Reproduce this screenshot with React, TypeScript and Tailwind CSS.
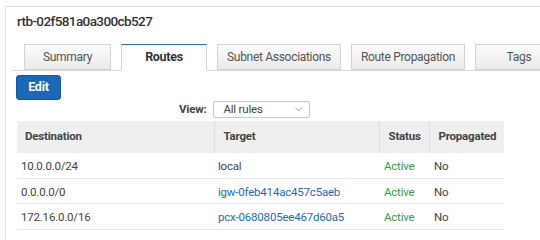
import { ChevronDown } from "lucide-react"

const tabs = [
  ["Summary", 87],
  ["Routes", 86],
  ["Subnet Associations", 124],
  ["Route Propagation", 114],
  ["Tags", 88],
] as const

const routes = [
  { dest: "10.0.0.0/24", target: "local", link: false, h: "h-[26px]" },
  { dest: "0.0.0.0/0", target: "igw-0feb414ac457c5aeb", link: true, h: "h-[25px]" },
  { dest: "172.16.0.0/16", target: "pcx-0680805ee467d60a5", link: true, h: "h-[26px]" },
]

export default function App() {
  return (
    <div className="w-[540px] h-[240px] overflow-hidden bg-white font-['Roboto',sans-serif] text-[#444]">
      <div className="ml-[5px] mt-[6px] h-[234px] border-l border-t border-[#e4e4e4]">
        <div className="pl-[11px] pt-[6px] text-[13.5px] leading-[16px] font-medium tracking-[-0.6px] text-[#333]">
          rtb-02f581a0a300cb527
        </div>

        <div className="mt-[15px] ml-[6px] flex gap-[10px] pl-[12px] border-b border-[#d9d9d9] h-[27px]">
          {tabs.map(([label, w]) => {
            const active = label === "Routes"
            return (
              <div
                key={label}
                style={{ width: w }}
                className={
                  active
                    ? "shrink-0 h-[27px] flex items-center justify-center bg-white border border-[#d5d5d5] border-t-[#2a73c0] border-b-white text-[12.5px] font-bold tracking-[-0.3px] text-[#333]"
                    : "shrink-0 h-[26px] flex items-center justify-center bg-gradient-to-b from-[#fbfbfb] to-[#ebebeb] border border-[#d3d3d3] text-[12px] tracking-[-0.3px] text-[#555]"
                }
              >
                {label}
              </div>
            )
          })}
        </div>

        <div className="pl-[10px] pt-[3px]">
          <button className="w-[45px] h-[25px] rounded-[3px] bg-[#1b68b8] border border-[#145a9f] text-white text-[12.5px] font-bold tracking-[-0.2px]">
            Edit
          </button>
        </div>

        <div className="flex items-center h-[17px] mt-[1px] pl-[173px]">
          <span className="text-[11.5px] font-bold tracking-[-0.2px] text-[#444] mr-[7px]">View:</span>
          <div className="w-[97px] h-[17px] border border-[#c9c9c9] rounded-[2px] flex items-center justify-between pl-[9px] pr-[5px] text-[11.5px] tracking-[-0.2px] text-[#444]">
            All rules
            <ChevronDown size={11} strokeWidth={1.5} className="text-[#666]" />
          </div>
        </div>

        <table className="ml-[11px] mt-[3px] w-[487px] border-collapse text-[11.5px] tracking-[-0.2px] table-fixed">
          <colgroup>
            <col className="w-[197px]" />
            <col className="w-[165px]" />
            <col className="w-[50px]" />
            <col className="w-[75px]" />
          </colgroup>
          <thead>
            <tr className="h-[32px] bg-[#efefef] font-bold text-[#444]">
              <th className="text-left pl-[8px] border-r border-[#dedede]">Destination</th>
              <th className="text-left pl-[9px] border-r border-[#dedede]">Target</th>
              <th className="text-left pl-[9px] border-r border-[#dedede]">Status</th>
              <th className="text-left pl-[9px]">Propagated</th>
            </tr>
          </thead>
          <tbody>
            {routes.map((r) => (
              <tr key={r.dest} className={`${r.h} border-b border-[#e6e6e6]`}>
                <td className="pl-[4px] pt-[2px]">{r.dest}</td>
                <td className={r.link ? "pl-[4px] pt-[2px] text-[#1f6bb5]" : "pl-[4px] pt-[2px]"}>{r.target}</td>
                <td className="pl-[5px] pt-[2px] text-[#3a9a4a]">Active</td>
                <td className="pl-[5px] pt-[2px]">No</td>
              </tr>
            ))}
          </tbody>
        </table>
      </div>
    </div>
  )
}
